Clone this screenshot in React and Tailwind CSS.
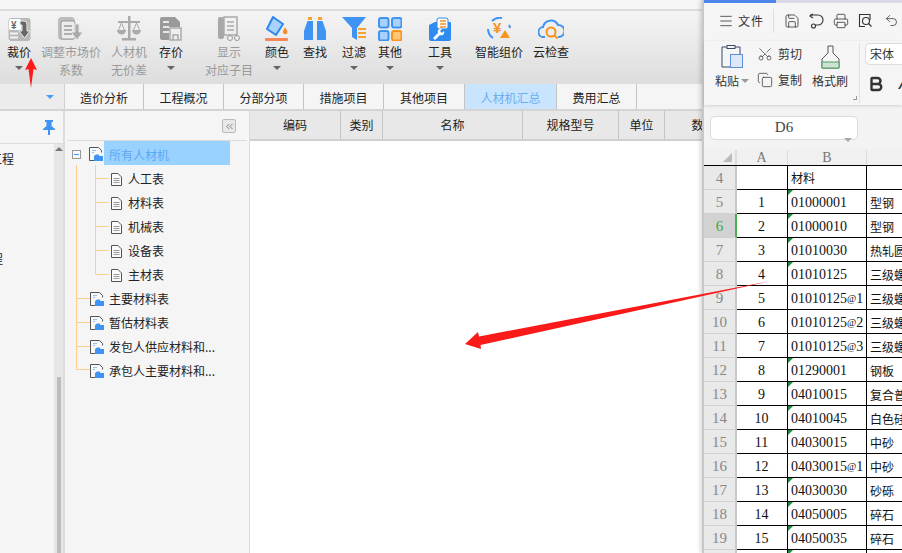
import { Menu, Scissors, Copy, Undo2, Save, Printer, Bold, ChevronsLeft } from 'lucide-react';

const cjk = '[font-family:"Noto_Sans_CJK_SC",sans-serif]';

function Caret({ color = 'border-t-[#666]' }) {
  return <span className={`inline-block w-0 h-0 border-x-[4px] border-x-transparent border-t-[4px] ${color}`} />;
}

// toolbar icons
const IconCaiJia = () => (
  <svg width="23" height="25" viewBox="0 0 23 25">
    <rect x="0.500" y="1" width="22" height="23" rx="3" fill="#b8b8b8" />
    <rect x="1" y="2" width="12" height="11" rx="1.500" fill="#fff" />
    <text x="3" y="11.500" fontSize="10" fontWeight="700" fill="#666" fontFamily="Liberation Sans">¥</text>
    <path d="M2 16.500h8M2 20.500h8" stroke="#f4f4f4" strokeWidth="2" />
    <path d="M12 4h4a3 3 0 0 1 3 3v7h3l-5.500 7-5.500-7h3V8h-2z" fill="#666" stroke="#ececec" />
  </svg>
);
const IconTiaoZheng = () => (
  <svg width="28" height="26" viewBox="0 0 28 26">
    <rect x="1" y="1" width="17" height="23" rx="4" fill="#bdbdbd" />
    <rect x="4" y="5" width="14" height="18" rx="2" fill="#ececec" stroke="#999" />
    <path d="M7 10h8M7 14h8M7 18h8" stroke="#999" strokeWidth="1.500" />
    <path d="M18 8h4v8h4l-6 8-6-8h4z" fill="#aaa" stroke="#e8e8e8" />
  </svg>
);
const IconScale = () => (
  <svg width="24" height="26" viewBox="0 0 24 26" fill="#aaa">
    <rect x="11" y="0" width="2.500" height="22" />
    <rect x="1" y="5" width="22" height="2" />
    <rect x="5" y="22" width="14" height="2.500" />
    <path d="M0 14h9a4.500 4.500 0 0 1-9 0zM15 14h9a4.500 4.500 0 0 1-9 0z" />
    <path d="M4.500 7l-3 7M4.500 7l3 7M19.500 7l-3 7M19.500 7l3 7" stroke="#aaa" fill="none" />
  </svg>
);
const IconCunJia = () => (
  <svg width="24" height="26" viewBox="0 0 24 26">
    <path d="M1 3a2 2 0 0 1 2-2h13l5 5v5H10v13H3a2 2 0 0 1-2-2z" fill="#9a9a9a" />
    <path d="M4 6h6M4 11h6M4 16h6" stroke="#e8e8e8" strokeWidth="2" />
    <rect x="11" y="12" width="11" height="12" fill="#eee" stroke="#aaa" strokeWidth="1.500" />
    <path d="M14 24v-5h5v5" fill="none" stroke="#aaa" strokeWidth="1.500" />
  </svg>
);
const IconXianShi = () => (
  <svg width="24" height="26" viewBox="0 0 24 26">
    <rect x="1" y="1" width="6" height="22" rx="2" fill="#a8a8a8" />
    <rect x="7" y="1" width="13" height="18" fill="none" stroke="#aaa" strokeWidth="1.500" />
    <path d="M10 6h7M10 10h7M10 14h7" stroke="#aaa" strokeWidth="1.500" />
    <circle cx="13" cy="22" r="2.500" fill="#eee" stroke="#999" />
    <circle cx="20" cy="22" r="2.500" fill="#eee" stroke="#999" />
  </svg>
);
const IconColor = () => (
  <svg width="24" height="26" viewBox="0 0 24 26">
    <path d="M8 1l10 7-7 11L2 13z" fill="#a9d2fb" stroke="#3088ee" strokeWidth="2" strokeLinejoin="round" />
    <path d="M5 7c1-4 3-5 5-5" fill="none" stroke="#3088ee" strokeWidth="1.500" />
    <path d="M20 11c1.500 2.500 2.500 3.500 2.500 5a2.300 2.300 0 0 1-4.600 0c0-1.500 1-2.500 2.100-5z" fill="#f58c2e" />
    <rect x="0" y="22" width="23" height="3" rx="1" fill="#f6855a" />
  </svg>
);
const IconFind = () => (
  <svg width="22" height="24" viewBox="0 0 22 24">
    <rect x="4" y="0" width="4" height="3" fill="#f7a130" />
    <rect x="14" y="0" width="4" height="3" fill="#f7a130" />
    <path d="M3.500 4h5.500v19H0V14zM18.500 4h-5.500v19h9V14z" fill="#3f93f2" />
  </svg>
);
const IconFilter = () => (
  <svg width="24" height="26" viewBox="0 0 24 26">
    <path d="M0 1h24l-9 11v12l-5-3v-9z" fill="#3f93f2" />
    <path d="M16 13h8M16 17h8M16 21h8" stroke="#f7a130" strokeWidth="2" />
  </svg>
);
const IconOther = () => (
  <svg width="24" height="24" viewBox="0 0 24 24">
    <rect x="1" y="1" width="9.500" height="9.500" rx="2" fill="#a9d2fb" stroke="#3f93f2" strokeWidth="2" />
    <rect x="14" y="1" width="9.500" height="9.500" rx="2" fill="#a9d2fb" stroke="#3f93f2" strokeWidth="2" />
    <rect x="1" y="14" width="9.500" height="9.500" rx="2" fill="#a9d2fb" stroke="#3f93f2" strokeWidth="2" />
    <rect x="14" y="14" width="9.500" height="9.500" rx="2" fill="#fcc777" stroke="#f7941e" strokeWidth="2" />
  </svg>
);
const IconTool = () => (
  <svg width="22" height="24" viewBox="0 0 22 24">
    <path d="M0 8l6-3h15a1 1 0 0 1 1 1v16a2 2 0 0 1-2 2H2a2 2 0 0 1-2-2z" fill="#2f8bef" />
    <rect x="8" y="1" width="11" height="11" rx="2" fill="#fff" stroke="#2f8bef" />
    <path d="M11 4h6M11 7h6M11 10h6" stroke="#f7941e" strokeWidth="1.500" />
    <path d="M4 21l5-5a3 3 0 0 1 4-4l-2 2 2 2 2-2a3 3 0 0 1-4 4l-5 5z" fill="#fff" />
  </svg>
);
const IconSmart = () => (
  <svg width="24" height="24" viewBox="0 0 24 24">
    <path d="M5 4a11 11 0 0 1 10-3M1 12a11 11 0 0 0 5 9M22 8a11 11 0 0 1 1 3" fill="none" stroke="#3f93f2" strokeWidth="2" />
    <text x="6" y="16" fontSize="15" fontWeight="700" fill="#f7941e" fontFamily="Liberation Sans">¥</text>
    <path d="M18 13l5 8h-10z" fill="#f7941e" />
  </svg>
);
const IconCloud = () => (
  <svg width="26" height="24" viewBox="0 0 26 24">
    <path d="M7 20h-1a5 5 0 0 1-1-10 8 8 0 0 1 15-2 6 6 0 0 1 1 12h-1" fill="none" stroke="#3f93f2" strokeWidth="2" />
    <circle cx="13" cy="15" r="4.500" fill="none" stroke="#f7941e" strokeWidth="2" />
    <path d="M16.500 18.500l3 3" stroke="#f7941e" strokeWidth="2" />
  </svg>
);

function ToolBtn({ icon, line1, line2, caret, muted, className = '' }) {
  return (
    <div className={`flex flex-col items-center shrink-0 ${className}`}>
      <div className="h-[28px] flex items-center justify-center">{icon}</div>
      <span className={`text-[12px] leading-[18px] whitespace-nowrap ${muted ? 'text-[#999]' : 'text-[#222]'}`}>{line1}</span>
      {line2 && <span className={`text-[12px] leading-[18px] whitespace-nowrap ${muted ? 'text-[#999]' : 'text-[#222]'}`}>{line2}</span>}
      {caret && <span className="flex h-[14px] items-center"><Caret /></span>}
    </div>
  );
}

const tabs = [
  ['造价分析', 'w-[79px]'],
  ['工程概况', 'w-[80px]'],
  ['分部分项', 'w-[80px]'],
  ['措施项目', 'w-[80px]'],
  ['其他项目', 'w-[81px]'],
  ['人材机汇总', 'w-[92px]', true],
  ['费用汇总', 'w-[80px]'],
];

const columns = [
  ['编码', 'w-[91px]'],
  ['类别', 'w-[42px]'],
  ['名称', 'w-[140px]'],
  ['规格型号', 'w-[96px]'],
  ['单位', 'w-[46px]'],
  ['数', 'w-[66px]'],
];

function FolderIcon() {
  return (
    <svg width="15" height="14" viewBox="0 0 15 14" className="shrink-0">
      <path d="M5 13.500H.5V.5h9l3 3v2" fill="#f8f8f8" stroke="#555" />
      <path d="M3 3.500h4M3 5.500h2" stroke="#8cc3f5" />
      <path d="M5 14V9l2-1.500h2.500l1 1.500H14v5z" fill="#3f93f2" />
    </svg>
  );
}

function FileIcon() {
  return (
    <svg width="11" height="13" viewBox="0 0 11 13" className="shrink-0">
      <path d="M.5.500h6.500l3.500 3.500v8.500h-10z" fill="#fafafa" stroke="#555" />
      <path d="M2.500 5.500h6M2.500 7.500h6M2.500 9.500h6" stroke="#999" />
    </svg>
  );
}

const treeTop = [
  ['人工表', '材料表', '机械表', '设备表', '主材表'],
  ['主要材料表', '暂估材料表', '发包人供应材料和...', '承包人主要材料和...'],
];

const sheet = [
  [1, '01000001', '型钢', true],
  [2, '01000010', '型钢', true],
  [3, '01010030', '热轧圆钢', true],
  [4, '01010125', '三级螺纹钢', true],
  [5, '01010125', '三级螺纹钢', false, '1'],
  [6, '01010125', '三级螺纹钢', false, '2'],
  [7, '01010125', '三级螺纹钢', false, '3'],
  [8, '01290001', '钢板', true],
  [9, '04010015', '复合普通水泥', true],
  [10, '04010045', '白色硅酸盐水泥', true],
  [11, '04030015', '中砂', true],
  [12, '04030015', '中砂', false, '1'],
  [13, '04030030', '砂砾', true],
  [14, '04050005', '碎石', true],
  [15, '04050035', '碎石', true],
  ['', '', '', true],
];

function SheetRow({ head, a, b, c, mark, active }) {
  return (
    <div className="flex h-[24px] shrink-0 border-b border-black text-[14px] text-[#111]">
      <div className={`w-[33px] shrink-0 flex items-center justify-center pt-[1px] text-[15px] border-b border-[#d0d0d0] -mb-px border-r-2 ${active ? 'bg-[#d2d2d2] text-[#3aa648] border-r-[#4caf50]' : 'bg-[#e9e9e9] text-[#888] border-r-[#c8c8c8]'}`}>
        {head}
      </div>
      <div className="w-[51px] shrink-0 flex items-center justify-center pt-[1px] pr-[1px] border-r border-black">{a}</div>
      <div className="relative w-[79px] shrink-0 flex items-center pt-[1px] pl-[3px] border-r border-black whitespace-nowrap">
        {mark && <span className="absolute left-0 top-0 w-0 h-0 border-t-[5px] border-t-[#1f8a3a] border-r-[5px] border-r-transparent" />}
        {b}
      </div>
      <div className="flex-1 flex items-center pt-[2px] pl-[3px] text-[12px] whitespace-nowrap overflow-hidden">{c}</div>
    </div>
  );
}

export default function App() {
  return (
    <div className={`relative w-[902px] h-[553px] overflow-hidden flex flex-col bg-[#f5f5f5] ${cjk}`}>
      {/* top strip */}
      <div className="h-[11px] shrink-0 bg-[#f6f6f6] border-b-2 border-[#dcdcdc]" />

      {/* toolbar */}
      <div className="h-[73px] shrink-0 flex pt-[4px] bg-gradient-to-b from-[#f4f4f4] to-[#dddddd]">
        <ToolBtn className="w-[38px]" icon={<IconCaiJia />} line1="裁价" caret />
        <ToolBtn className="w-[66px]" muted icon={<IconTiaoZheng />} line1="调整市场价" line2="系数" />
        <ToolBtn className="w-[50px]" muted icon={<IconScale />} line1="人材机" line2="无价差" />
        <ToolBtn className="w-[34px]" icon={<IconCunJia />} line1="存价" caret />
        <ToolBtn className="w-[48px] ml-[17px]" muted icon={<IconXianShi />} line1="显示" line2="对应子目" />
        <ToolBtn className="w-[38px] ml-[5px]" icon={<IconColor />} line1="颜色" caret />
        <ToolBtn className="w-[38px]" icon={<IconFind />} line1="查找" />
        <ToolBtn className="w-[40px]" icon={<IconFilter />} line1="过滤" caret />
        <ToolBtn className="w-[32px]" icon={<IconOther />} line1="其他" caret />
        <ToolBtn className="w-[40px] ml-[14px]" icon={<IconTool />} line1="工具" caret />
        <ToolBtn className="w-[58px] ml-[10px]" icon={<IconSmart />} line1="智能组价" />
        <ToolBtn className="w-[46px]" icon={<IconCloud />} line1="云检查" />
      </div>

      {/* tabs */}
      <div className="h-[27px] shrink-0 flex border-b-2 border-[#d4d4d4] bg-[#f5f5f5]">
        <div className="w-[65px] shrink-0 flex items-center justify-end pr-[10px] bg-[#ececec] border-r border-[#d0d0d0]">
          <Caret color="border-t-[#4a9bf5]" />
        </div>
        {tabs.map(([label, w, active]) => (
          <div
            key={label}
            className={`${w} shrink-0 flex items-center justify-center pt-[2px] text-[12px] border-r border-[#c4c4c4] ${active ? 'bg-[#c9e4fd] text-[#69aef5]' : 'text-[#222]'}`}
          >
            {label}
          </div>
        ))}
      </div>

      {/* body */}
      <div className="flex-1 flex min-h-0">
        {/* project side */}
        <div className="w-[65px] shrink-0 flex flex-col border-r-2 border-[#dcdcdc]">
          <div className="h-[33px] shrink-0 flex items-center justify-end pr-[8px] pt-[1px] border-b border-[#dcdcdc]">
            <svg width="12" height="15" viewBox="0 0 12 15">
              <path d="M2 0h8v2H8.500v4L12 9v1H7v5H5v-5H0V9l3.500-3V2H2z" fill="#3f93f2" />
            </svg>
          </div>
          <div className="flex-1 flex min-h-0">
            <div className="flex-1 relative overflow-hidden text-[12px] text-[#222]">
              <span className="absolute -left-[10px] top-[6px]">工程</span>
              <span className="absolute -left-[9px] top-[106px]">程</span>
            </div>
            <div className="w-[9px] shrink-0 bg-[#e6e6e6] flex flex-col items-center justify-between pt-[3px]">
              <span className="w-0 h-0 border-x-[4px] border-x-transparent border-b-[4px] border-b-[#777]" />
              <span className="w-[4px] h-[176px] bg-[#bdbdbd]" />
            </div>
          </div>
        </div>

        {/* tree */}
        <div className="w-[185px] shrink-0 flex flex-col border-r border-[#dcdcdc]">
          <div className="h-[30px] shrink-0 flex justify-end pt-[8px] pr-[11px] mx-[2px] border-b border-[#dcdcdc]">
            <div className="w-[14px] h-[14px] rounded-[2px] border border-[#bbb] bg-[#e8e8e8] flex items-center justify-center">
              <ChevronsLeft size={11} strokeWidth={1.5} color="#555" />
            </div>
          </div>
          <div className="relative flex flex-col text-[12px] text-[#222]">
            <svg width="44" height="232" viewBox="0 0 44 232" className="absolute left-0 top-0 pointer-events-none">
              <path d="M11.500 24V228.500M11.500 157.500h13M11.500 181.500h13M11.500 205.500h13M11.500 228.500h13M30.500 24V133.500M30.500 37.500h13M30.500 61.500h13M30.500 85.500h13M30.500 109.500h13M30.500 133.500h13" fill="none" stroke="#fdcf8f" />
              <rect x="7.500" y="9.500" width="8" height="8" fill="#f8f8f8" stroke="#999" />
              <path d="M9 13.500h5" stroke="#3f93f2" />
            </svg>
            <div className="h-[24px] flex">
              <div className="w-[39px] shrink-0 flex justify-end items-center pt-[2px]"><FolderIcon /></div>
              <div className="w-[126px] h-full flex items-center pt-[4px] bg-[#99d1ff] text-[#5ea8f2] pl-[5px]">所有人材机</div>
            </div>
            {treeTop[0].map((t) => (
              <div key={t} className="h-[24px] flex items-center pt-[4px] pl-[46px] gap-[6px]">
                <FileIcon />
                <span>{t}</span>
              </div>
            ))}
            {treeTop[1].map((t) => (
              <div key={t} className="h-[24px] flex items-center pt-[4px] pl-[25px] gap-[4px] whitespace-nowrap">
                <FolderIcon />
                <span>{t}</span>
              </div>
            ))}
          </div>
        </div>

        {/* grid */}
        <div className="flex-1 flex flex-col bg-white min-w-0">
          <div className="h-[30px] shrink-0 flex bg-[#e8e8e8] border-b-2 border-[#d0d0d0]">
            {columns.map(([label, w]) => (
              <div key={label} className={`${w} shrink-0 flex items-center justify-center text-[12px] text-[#222] border-r border-[#c4c4c4]`}>{label}</div>
            ))}
          </div>
        </div>
      </div>

      {/* spreadsheet window laid over the app */}
      <div className="absolute right-0 top-0 w-[200px] h-[553px] flex flex-col bg-[#f3f3f3] border-l-2 border-[#c8c8c8] shadow-[-2px_0_4px_rgba(0,0,0,0.15)]">
        <div className="h-[3px] shrink-0 flex bg-[#d9d9e6]"><div className="w-[72px] bg-[#4f86ec]" /></div>
        <div className="h-[38px] shrink-0 flex items-center pb-[3px] pl-[14px] bg-[#f5f5f5] text-[12px] text-[#333]">
          <Menu size={16} strokeWidth={1.2} />
          <span className="ml-[4px] tracking-[1px]">文件</span>
          <span className="ml-[9px] w-px h-[24px] bg-[#ddd]" />
          <span className="flex items-center gap-[9px] ml-[10px]">
            <Save size={16} strokeWidth={1.2} />
            <svg width="15" height="16" viewBox="0 0 15 16" fill="none" stroke="#333" strokeWidth="1.100"><path d="M1 2h8a5 5 0 0 1 0 10H6" /><path d="M4 1L1 3l3 2" /><circle cx="4.500" cy="13" r="2" /></svg>
            <Printer size={16} strokeWidth={1.2} />
            <svg width="15" height="15" viewBox="0 0 15 15" fill="none" stroke="#333" strokeWidth="1.100"><path d="M12 7V1.500H1.500v12H7" /><circle cx="8" cy="8" r="3.500" /><path d="M10.500 10.500l3 3" /></svg>
            <Undo2 size={15} strokeWidth={1.2} className="ml-[2px]" />
          </span>
        </div>
        <div className="h-[64px] shrink-0 flex bg-[#f5f5f5] shadow-[0_1px_3px_rgba(0,0,0,0.15)] text-[12px] text-[#333] relative">
          <div className="w-[38px] ml-[9px] flex flex-col items-center pt-[4px]">
            <svg width="22" height="24" viewBox="0 0 22 24" fill="none">
              <path d="M5 2h14v20H1V2z" stroke="#3a4a6a" />
              <rect x="6" y="0.500" width="8" height="3" fill="#f5f5f5" stroke="#3a4a6a" />
              <rect x="9.500" y="9.500" width="12" height="13" fill="#dde7f6" stroke="#5a8fe0" />
            </svg>
            <span className="mt-[3px] flex items-center gap-[2px] whitespace-nowrap">粘贴<Caret color="border-t-[#999]" /></span>
          </div>
          <div className="ml-[6px] flex flex-col gap-[7px] pt-[3px]">
            <span className="flex items-center gap-[5px] h-[19px]"><Scissors size={16} strokeWidth={1} className="-rotate-90" />剪切</span>
            <span className="flex items-center gap-[5px] h-[19px]"><Copy size={16} strokeWidth={1.1} />复制</span>
          </div>
          <div className="ml-[10px] w-[36px] flex flex-col items-center pt-[4px]">
            <svg width="19" height="24" viewBox="0 0 19 24" fill="none">
              <path d="M7 1h5v7l6 6v9H1v-9l6-6z" stroke="#555" />
              <path d="M1 17h17v6H1z" fill="#cfe3d4" stroke="#4a9a5f" />
            </svg>
            <span className="mt-[3px] whitespace-nowrap">格式刷</span>
          </div>
          <span className="absolute left-[149px] bottom-[5px] w-[4px] h-[4px] border-r border-b border-[#999]" />
          <span className="ml-[11px] my-[2px] w-px bg-[#e2e2e2]" />
          <div className="ml-[5px] flex-1 flex flex-col pt-[2px] min-w-0">
            <div className="h-[22px] border border-r-0 border-[#ddd] rounded-l-[5px] bg-white flex items-center pl-[4px]">宋体</div>
            <div className="mt-[5px] ml-[2px] flex items-center gap-[14px] text-[18px] text-[#333] whitespace-nowrap overflow-hidden [font-family:'Liberation_Sans',sans-serif]">
              <Bold size={18} strokeWidth={3.2} className="shrink-0" />
              <span className="italic">A</span>
            </div>
          </div>
        </div>
        <div className="h-[44px] shrink-0 flex items-center pl-[6px]">
          <div className="w-[148px] h-[24px] mt-[1px] rounded-[5px] border border-[#ddd] bg-white flex items-center justify-center relative text-[15px] text-[#444] [font-family:'Liberation_Serif',serif]">
            D6
            <span className="absolute right-[5px] top-[9px]"><Caret color="border-t-[#aaa]" /></span>
          </div>
        </div>
        <div className="h-[17px] shrink-0 flex pt-[1px] text-[14px] text-[#777] bg-[#f0f0f0] [font-family:'Liberation_Serif',serif] border-b border-black">
          <div className="w-[33px] shrink-0 border-r-2 border-[#dcdcdc] flex justify-end items-end pr-[3px] pb-[3px]">
            <span className="w-0 h-0 border-l-[9px] border-l-transparent border-b-[9px] border-b-[#bbb]" />
          </div>
          <div className="w-[51px] shrink-0 flex items-center justify-center pr-[1px] border-r border-[#dcdcdc]">A</div>
          <div className="w-[79px] shrink-0 flex items-center justify-center border-r border-[#dcdcdc]">B</div>
        </div>
        <div className="flex flex-col bg-white overflow-hidden [font-family:'Liberation_Serif','Noto_Sans_CJK_SC',serif]">
          <SheetRow head={4} a="" b={<span className={`${cjk} text-[12px]`}>材料</span>} c="" />
          {sheet.map(([a, b, c, mark, suffix], i) => (
            <SheetRow
              key={i}
              head={i + 5}
              a={a}
              b={<>{b}{suffix && <><span className="text-[10px]">@</span>{suffix}</>}</>}
              c={<span className={cjk}>{c}</span>}
              mark={mark}
              active={i === 1}
            />
          ))}
        </div>
      </div>

      {/* red annotation arrows */}
      <svg width="902" height="553" viewBox="0 0 902 553" className="absolute left-0 top-0 pointer-events-none">
        <path d="M31 58l6 12-3.500-1L31 88l-2.500-19-3.500 1z" fill="#fb1a1a" />
        <path d="M771 281L479 336.500 478 332 465 344 481 349 480.500 345z" fill="#fb1a1a" />
      </svg>
    </div>
  );
}
